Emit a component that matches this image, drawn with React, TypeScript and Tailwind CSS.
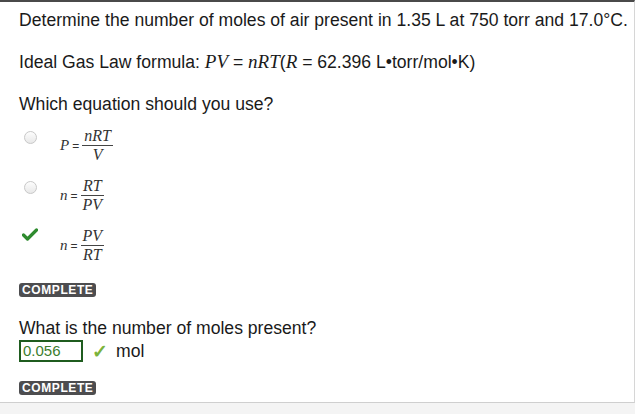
import React from 'react';

const sans = { fontFamily: '"Liberation Sans", Arial, sans-serif' };
const serif = { fontFamily: '"Liberation Serif", "Times New Roman", serif' };

function Radio() {
  return (
    <span className="block w-[13px] h-[13px] rounded-full border border-[#c8c8c8] bg-gradient-to-b from-[#fdfdfd] to-[#e8e8e8]" />
  );
}

function Check() {
  return (
    <svg width="16" height="13" viewBox="0 0 16 13">
      <path d="M1.5 7 L5.5 11 L14.5 2" fill="none" stroke="#2e8b2e" strokeWidth="3.2" strokeLinecap="round" strokeLinejoin="round" />
    </svg>
  );
}

function Fraction({ lhs, num, den }: { lhs: string; num: string; den: string }) {
  return (
    <div className="flex items-center text-[#333] italic" style={serif}>
      <span className="text-[15px]">{lhs}</span>
      <span className="text-[12px] not-italic mx-[3px]" style={sans}>=</span>
      <div className="flex flex-col items-center text-[16px] leading-[18px]">
        <span className="px-[2px]">{num}</span>
        <span className="block w-full h-px bg-[#444]" />
        <span className="px-[2px]">{den}</span>
      </div>
    </div>
  );
}

function Badge() {
  return (
    <span
      className="inline-block bg-[#4d4d4f] text-white text-[12px] font-bold leading-[14px] tracking-[0.6px] rounded-[3px] px-[3px]"
      style={sans}
    >
      COMPLETE
    </span>
  );
}

export default function App() {
  const options = [
    { lhs: 'P', num: 'nRT', den: 'V', state: 'radio' },
    { lhs: 'n', num: 'RT', den: 'PV', state: 'radio' },
    { lhs: 'n', num: 'PV', den: 'RT', state: 'check' },
  ];

  return (
    <div className="w-[635px] h-[414px] bg-[#f4f4f4] overflow-hidden" style={sans}>
      <div className="bg-white h-[403px] border-t-2 border-[#4a4a4a] border-r border-r-[#d6d6d6] border-b border-b-[#cfcfcf] pl-[19px] text-[#1a1a1a]">
        <p className="text-[17.6px] leading-[20px] mt-[8px] whitespace-nowrap">
          Determine the number of moles of air present in 1.35 L at 750 torr and 17.0°C.
        </p>
        <p className="text-[17.6px] leading-[20px] mt-[22px] whitespace-nowrap">
          Ideal Gas Law formula:{' '}
          <span className="italic text-[19px]" style={serif}>PV</span> ={' '}
          <span className="italic text-[19px]" style={serif}>nRT</span>(
          <span className="italic text-[19px]" style={serif}>R</span> = 62.396 L•torr/mol•K)
        </p>
        <p className="text-[17.6px] leading-[20px] mt-[22px]">Which equation should you use?</p>

        <div className="flex flex-col mt-[8px]">
          {options.map((o, i) => (
            <div key={i} className="flex h-[50px]">
              <div className="w-[22px] pt-[9px] flex justify-center">
                {o.state === 'radio' ? <Radio /> : <div className="mt-[-3px]"><Check /></div>}
              </div>
              <div className="ml-[19px] pt-[5px]">
                <Fraction lhs={o.lhs} num={o.num} den={o.den} />
              </div>
            </div>
          ))}
        </div>

        <div className="mt-[5px]">
          <Badge />
        </div>

        <p className="text-[17.6px] leading-[20px] mt-[17px]">What is the number of moles present?</p>
        <div className="flex items-center">
          <div className="w-[64px] h-[22px] border-2 border-[#1f5c1f] flex items-center px-[2px] text-[15px] text-[#3b7d2e]">
            0.056
          </div>
          <span className="ml-[9px] text-[#7bb33b] text-[19px] leading-none font-bold">✓</span>
          <span className="ml-[8px] text-[17.6px]">mol</span>
        </div>

        <div className="mt-[11px]">
          <Badge />
        </div>
      </div>
    </div>
  );
}
